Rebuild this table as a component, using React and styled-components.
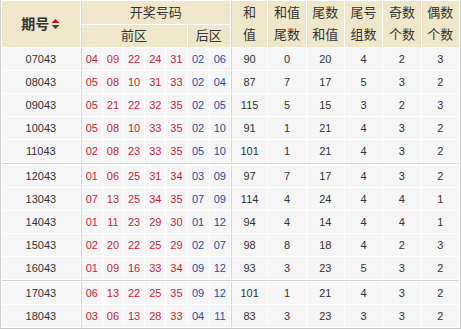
import React from "react";
import styled, { createGlobalStyle } from "styled-components";

const GlobalStyle = createGlobalStyle`
  html, body {
    margin: 0;
    padding: 0;
    background: #fff;
  }
`;

const Table = styled.table`
  width: 461px;
  table-layout: fixed;
  border-collapse: separate;
  border-spacing: 1px;
  border: 1px solid #cfcfcf;
  border-top: none;
  background: #fff;
  font-family: "Liberation Sans", "Noto Sans CJK SC", sans-serif;
  color: #333;
`;

const Head = styled.th`
  background: #f0e6c9;
  font-weight: normal;
  font-size: 13px;
  line-height: 22px;
  padding: 0;
  text-align: center;
  color: #333;
  height: ${(p) => p.$h || 22}px;
  border-left: ${(p) => (p.$split ? "1px solid #d6d6d6" : "none")};
`;

const TitleHead = styled(Head)`
  font-size: 14px;
  font-weight: bold;
  color: #333;
`;

const Title = styled.span`
  display: inline-flex;
  align-items: center;
  gap: 2px;
`;

const Cell = styled.td`
  background: #f6f6f6;
  height: 22px;
  padding: 0;
  text-align: center;
  font-size: 11px;
  color: ${(p) => (p.$tone === "red" ? "#c41f3b" : p.$tone === "blue" ? "#1d4ea6" : "#333")};
  border-left: ${(p) => (p.$split ? "1px solid #d6d6d6" : "none")};
`;

const Divider = styled.td`
  height: 1px;
  padding: 0;
  background: #d4d4d4;
`;

const SortIcon = () => (
  <svg width="9" height="12" viewBox="0 0 9 12">
    <path d="M4.5 1 L8.5 5 L0.5 5 Z" fill="#c8102e" />
    <path d="M0.5 7 L8.5 7 L4.5 11 Z" fill="#444" />
  </svg>
);

const rows = [
  ["07043", "04 09 22 24 31", "02 06", 90, 0, 20, 4, 2, 3],
  ["08043", "05 08 10 31 33", "02 04", 87, 7, 17, 5, 3, 2],
  ["09043", "05 21 22 32 35", "02 05", 115, 5, 15, 3, 2, 3],
  ["10043", "05 08 10 33 35", "02 10", 91, 1, 21, 4, 3, 2],
  ["11043", "02 08 23 33 35", "05 10", 101, 1, 21, 4, 3, 2],
  ["12043", "01 06 25 31 34", "03 09", 97, 7, 17, 4, 3, 2],
  ["13043", "07 13 25 34 35", "07 09", 114, 4, 24, 4, 4, 1],
  ["14043", "01 11 23 29 30", "01 12", 94, 4, 14, 4, 4, 1],
  ["15043", "02 20 22 25 29", "02 07", 98, 8, 18, 4, 2, 3],
  ["16043", "01 09 16 33 34", "09 12", 93, 3, 23, 5, 3, 2],
  ["17043", "06 13 22 25 35", "09 12", 101, 1, 21, 4, 3, 2],
  ["18043", "03 06 13 28 33", "04 11", 83, 3, 23, 3, 3, 2],
];

const stats = [
  ["和", "值"],
  ["和值", "尾数"],
  ["尾数", "和值"],
  ["尾号", "组数"],
  ["奇数", "个数"],
  ["偶数", "个数"],
];

const widths = [77, 21, 20, 20, 20, 20, 21, 20, 36, 37, 37, 37, 37, 37];

const Row = ({ row }) => {
  const [issue, front, back, ...rest] = row;
  return (
    <tr>
      <Cell>{issue}</Cell>
      {front.split(" ").map((n, i) => (
        <Cell key={"f" + i} $tone="red" $split={i === 0}>
          {n}
        </Cell>
      ))}
      {back.split(" ").map((n, i) => (
        <Cell key={"b" + i} $tone="blue">
          {n}
        </Cell>
      ))}
      {rest.map((v, i) => (
        <Cell key={"s" + i} $split={i === 0}>
          {v}
        </Cell>
      ))}
    </tr>
  );
};

export default function App() {
  return (
    <>
      <GlobalStyle />
      <Table>
        <colgroup>
          {widths.map((w, i) => (
            <col key={i} style={{ width: w }} />
          ))}
        </colgroup>
        <thead>
          <tr>
            <TitleHead rowSpan={2}>
              <Title>
                期号
                <SortIcon />
              </Title>
            </TitleHead>
            <Head colSpan={7} $split $h={23}>
              开奖号码
            </Head>
            {stats.map(([a, b], i) => (
              <Head key={i} rowSpan={2} $split={i === 0}>
                {a}
                <br />
                {b}
              </Head>
            ))}
          </tr>
          <tr>
            <Head colSpan={5} $split>
              前区
            </Head>
            <Head colSpan={2}>后区</Head>
          </tr>
        </thead>
        <tbody>
          {rows.slice(0, 5).map((r) => (
            <Row key={r[0]} row={r} />
          ))}
          <tr>
            <Divider colSpan={14} />
          </tr>
          {rows.slice(5, 10).map((r) => (
            <Row key={r[0]} row={r} />
          ))}
          <tr>
            <Divider colSpan={14} />
          </tr>
          {rows.slice(10).map((r) => (
            <Row key={r[0]} row={r} />
          ))}
        </tbody>
      </Table>
    </>
  );
}
